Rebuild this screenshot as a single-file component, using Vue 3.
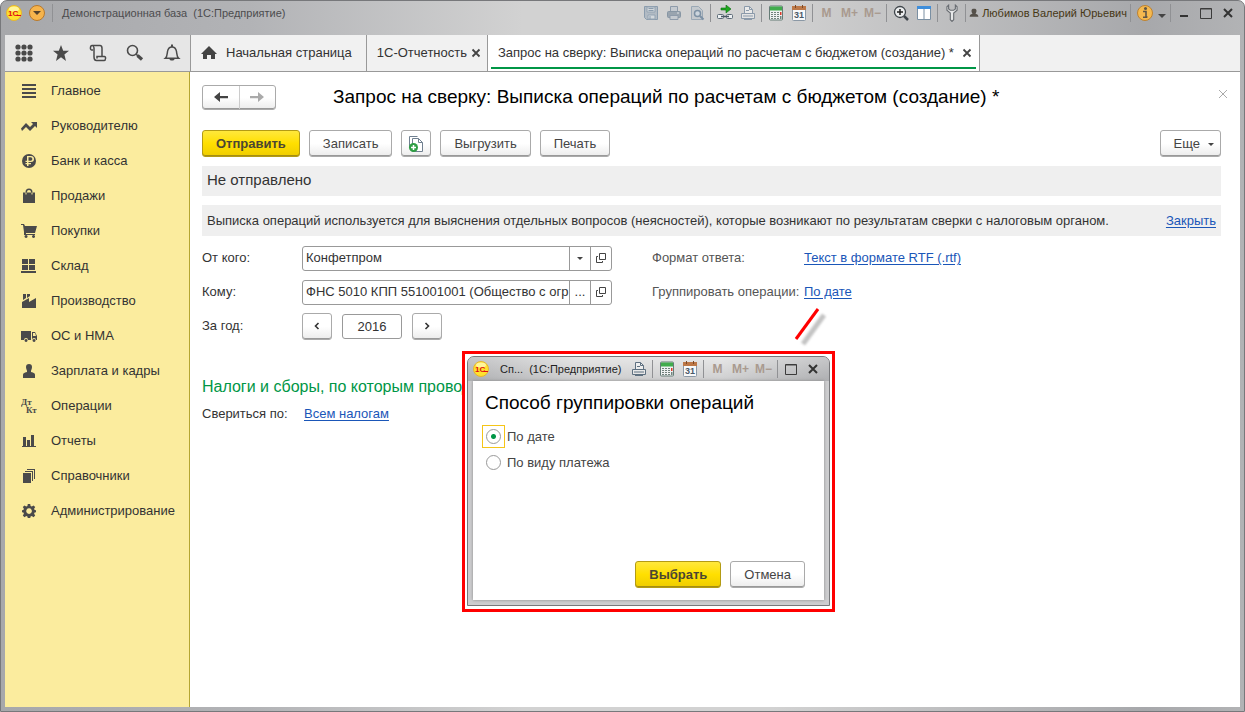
<script setup>
import { ref } from 'vue'

const sections = [
  { label: 'Главное', d: 'M1 1h14v2H1zM1 5h14v2H1zM1 9h14v2H1zM1 13h14v2H1z' },
  { label: 'Руководителю', d: 'M0 10.500L5 5l4 4 3-3-2-2h6v6l-2-2-5 5-4-4-4 4z' },
  { label: 'Банк и касса', d: 'M8 1a7 7 0 1 0 0 14A7 7 0 0 0 8 1zM6 3h4a2.500 2.500 0 0 1 0 6H7.500v1H10v1.200H7.500V13H6v-1.800H4.500V10H6V9H4.500V7.700H6zM7.500 4.300v3.400H9.700a1.700 1.700 0 0 0 0-3.400z' },
  { label: 'Продажи', d: 'M2 4.500h2.500V4a3.500 3.500 0 0 1 7 0v.5H14V15H2zM6 4.500h4V4a2 2 0 0 0-4 0zM4.500 4.500v2h1v-2zM10.500 4.500v2h1v-2z' },
  { label: 'Покупки', d: 'M0 1h3l1 2h12l-2 7H5v1h9v1H3V9L2 2H0zM5 12a1.500 1.500 0 1 0 .1 0zM12.500 12a1.500 1.500 0 1 0 .1 0z' },
  { label: 'Склад', d: 'M1 1h6v5H1zM8 1h6v5H8zM1 7h6v5H1zM8 7h6v5H8zM0 13h15v2H0z' },
  { label: 'Производство', d: 'M2 1h3v4l-3 2zM6 1h3v2L6 5zM1 9l7-4v4l7-4v10H1z' },
  { label: 'ОС и НМА', d: 'M0 3h10v9H7a2 2 0 0 0-4 0H0zM11 4h3l2 4v4h-1a2 2 0 0 0-4 0zM12 5v3h3l-1-3zM5 11a1.500 1.500 0 1 0 .1 0zM13 11a1.500 1.500 0 1 0 .1 0z' },
  { label: 'Зарплата и кадры', d: 'M8 1c2 0 3 1 3 3 0 2-1 3-1 4v1c3 1 4 1 4 3v3H2v-3c0-2 1-2 4-3V8C6 7 5 6 5 4c0-2 1-3 3-3z' },
  { label: 'Операции', marks: true },
  { label: 'Отчеты', d: 'M2 4h3v9H2zM6 7h3v6H6zM10 2h3v11h-3zM1 13h14v1H1z' },
  { label: 'Справочники', d: 'M2 5h8v10H2zM4 3h8v10h-1V4H4zM6 1h8v10h-1V2H6z' },
  { label: 'Администрирование', d: 'M6.800 1h2.400l.4 2 1.200.5 1.700-1.100 1.700 1.700-1.100 1.700.5 1.200 1.400.3v1.900l-1.400.4-.5 1.200 1.100 1.700-1.700 1.700-1.700-1.100-1.200.5-.4 1.400H6.800l-.4-1.400-1.200-.5-1.700 1.100-1.700-1.700 1.100-1.700-.5-1.200L1 9.200V7.300L2.400 7l.5-1.200-1.100-1.700 1.700-1.700 1.700 1.100L6.400 3zM8 5.300a2.800 2.800 0 1 0 .1 0z' }
]

const from = ref('Конфетпром')
const to = ref('ФНС 5010 КПП 551001001 (Общество с огр')
const year = ref('2016')
const grouping = ref('date')
</script>

<template>
  <div class="window">
    <svg class="sprite" aria-hidden="true">
      <symbol id="i-save" viewBox="0 0 16 16">
        <path d="M2 1.500h12.500v13h-11l-2-2v-11z" fill="#b1bac3" stroke="#8b9cad" />
        <path d="M4 2h8v5H4zM5 10h7v4H5z" fill="#d3d8dc" stroke="#95a4b3" />
        <path d="M5.500 3.500h5M5.500 5.500h5M7 11v3" stroke="#8b9cad" />
      </symbol>
      <symbol id="i-print" viewBox="0 0 16 16">
        <path d="M4.500 6V1.500h7V6" fill="#c5cad0" stroke="#8e9baa" />
        <rect x="1.500" y="6.500" width="13" height="6" rx="1" fill="#99a4af" stroke="#8796a4" />
        <path d="M4 10.500h8v4H4z" fill="#c5cad0" stroke="#8e9baa" />
        <path d="M11 8h2" stroke="#dde1e4" />
      </symbol>
      <symbol id="i-preview" viewBox="0 0 16 16">
        <path d="M2.500 14.500v-13h7l4 4v9z" fill="#c4c9ce" stroke="#9aa8b5" />
        <circle cx="8.500" cy="8.500" r="3" fill="#ccd5dd" stroke="#7d91a4" stroke-width="1.500" />
        <path d="M11 11l3.500 3.500" stroke="#7d91a4" stroke-width="2" />
      </symbol>
      <symbol id="i-link" viewBox="0 0 16 16">
        <path d="M4 3h5V0l5 4-5 4V5H4z" fill="#1fa81f" stroke="#0c6b12" stroke-width=".6" />
        <rect x=".5" y="9.500" width="6" height="4" rx="1" fill="#eef1f3" stroke="#5d6b77" />
        <rect x="9.500" y="9.500" width="6" height="4" rx="1" fill="#eef1f3" stroke="#5d6b77" />
        <path d="M4 11.500h8" stroke="#4b5965" stroke-width="1.500" />
      </symbol>
      <symbol id="i-doc" viewBox="0 0 16 16">
        <path d="M4.500 9V1.500h5l3 3V9" fill="#fff" fill-opacity=".5" stroke="currentColor" />
        <path d="M9.500 1.500v3h3M6 5.500h3" fill="none" stroke="currentColor" />
        <path d="M1.500 8.500h13v5h-13z" fill="#fff" fill-opacity=".4" stroke="currentColor" />
        <path d="M3 11h10M4 14.500h8" stroke="currentColor" />
      </symbol>
      <symbol id="i-calc" viewBox="0 0 16 16">
        <rect x="1.500" y="1" width="13" height="14" rx="1" fill="#eef1f1" stroke="#657c76" />
        <path d="M2 1.500h12v4H2z" fill="#41ac4d" />
        <path d="M3 7.500h8M3 9.500h8M3 11.500h8M3 13.500h8" stroke="#71817c" stroke-dasharray="2 1" />
        <path d="M12 7h1.500v3H12z" fill="#dc3a2b" />
        <path d="M12 11h1.500v3H12z" fill="#71817c" />
      </symbol>
      <symbol id="i-zoom" viewBox="0 0 16 16">
        <circle cx="7" cy="7" r="5.500" fill="#eceeef" stroke="#3f454b" stroke-width="1.300" />
        <path d="M4 7h6M7 4v6" stroke="#222" stroke-width="1.500" />
        <path d="M11 11l4 4" stroke="#3f454b" stroke-width="2.500" />
      </symbol>
      <symbol id="i-split" viewBox="0 0 16 16">
        <path d="M1.500 1.500h13v13h-13zM8 4v10" fill="#fff" stroke="#7a8fa2" />
        <path d="M1 1h14v3H1z" fill="#3f8edb" />
      </symbol>
      <symbol id="i-wrench" viewBox="0 0 16 16">
        <path d="M5 1L3.500 2.500v3L6.500 8v6l1.500 1.500L9.500 14V8l3-2.500v-3L11 1v3.500L9.500 5.500h-3L5 4.500z" fill="#e7e8e9" stroke="#696d72" />
      </symbol>
      <symbol id="i-user" viewBox="0 0 16 16">
        <path d="M8 1c3 0 4 1 4 3.500S11 8 10.500 9c3 1 4.500 2 4.500 5H1c0-3 1.500-4 4.500-5C5 8 4 7 4 4.500S5 1 8 1z" fill="#55504a" />
      </symbol>
      <symbol id="i-max" viewBox="0 0 16 16"><path d="M2.500 3.500h11v10h-11z" fill="none" stroke="#3b3b3b" /><path d="M2 4.300h12" stroke="#3b3b3b" stroke-width=".6" /></symbol>
      <symbol id="i-close" viewBox="0 0 16 16"><path d="M4 4l8 8M12 4l-8 8" stroke="#333" stroke-width="2" /></symbol>
      <symbol id="i-open" viewBox="0 0 16 16"><path d="M6.500 3.500h6v6h-6zM5 6.500H3.500v6h6V11" fill="none" stroke="#444" /></symbol>
    </svg>

    <header class="titlebar">
      <svg class="i16" viewBox="0 0 16 16">
        <circle cx="8" cy="8" r="7.500" fill="#ffe22e" stroke="#e6b52e" />
        <ellipse cx="8" cy="4" rx="5" ry="2.500" fill="#fff59a" />
        <text class="logo-text" x="2" y="11">1С</text>
        <path d="M11 10.500h4" stroke="#e00c18" />
      </svg>
      <button class="round-menu" aria-label="Меню">
        <svg class="i16" viewBox="0 0 16 16"><circle cx="8" cy="8" r="7.500" fill="#f6b44c" stroke="#b9792b" /><path d="M4 6h8l-4 4z" fill="#54422c" /></svg>
      </button>
      <i class="sep"></i>
      <span class="app-name">Демонстрационная база&nbsp; (1С:Предприятие)</span>
      <div class="tools">
        <button aria-label="Сохранить"><svg class="i16"><use href="#i-save" /></svg></button>
        <button aria-label="Печать"><svg class="i16"><use href="#i-print" /></svg></button>
        <button aria-label="Просмотр"><svg class="i16"><use href="#i-preview" /></svg></button>
        <i class="sep"></i>
        <button aria-label="Ссылка"><svg class="i16"><use href="#i-link" /></svg></button>
        <button class="dim" aria-label="Перейти по ссылке"><svg class="i16"><use href="#i-doc" /></svg></button>
        <i class="sep"></i>
        <button aria-label="Калькулятор"><svg class="i16"><use href="#i-calc" /></svg></button>
        <button aria-label="Календарь">
          <svg class="i16" viewBox="0 0 16 16"><rect x="1.500" y="1.500" width="13" height="14" rx="1" fill="#f8f9fa" stroke="#8b98a5" /><path d="M1 1h14v4H1z" fill="#bd7847" /><path d="M4.500 0v3M11.500 0v3" stroke="#7b4a28" /><text class="day" x="3" y="13">31</text></svg>
        </button>
        <i class="sep"></i>
        <button class="mem">M</button>
        <button class="mem">M+</button>
        <button class="mem">M−</button>
        <i class="sep"></i>
        <button aria-label="Масштаб"><svg class="i16"><use href="#i-zoom" /></svg></button>
        <button aria-label="Панели"><svg class="i16"><use href="#i-split" /></svg></button>
        <i class="sep"></i>
        <button aria-label="Настройки"><svg class="i18"><use href="#i-wrench" /></svg></button>
        <i class="sep"></i>
        <button class="user"><svg class="i10"><use href="#i-user" /></svg>Любимов Валерий Юрьевич</button>
        <i class="sep"></i>
        <button aria-label="Справка">
          <svg class="i16" viewBox="0 0 16 16"><circle cx="8" cy="8" r="7.500" fill="#f5b94f" stroke="#bd8231" /><circle cx="8.500" cy="3.500" r="1.500" fill="#5e5547" /><path d="M6 6.500h3v5.500h1.500M6 12.200h4" fill="none" stroke="#5e5547" stroke-width="1.600" /></svg>
        </button>
        <button class="narrow" aria-label="Еще"><svg class="i10" viewBox="0 0 10 10"><path d="M1 6h8L5 10z" fill="#444" /></svg></button>
        <i class="sep"></i>
        <button class="win" aria-label="Свернуть"><svg class="i16" viewBox="0 0 16 16"><path d="M4 10h8v2H4z" fill="#333" /></svg></button>
        <button class="win" aria-label="Развернуть"><svg class="i16"><use href="#i-max" /></svg></button>
        <button class="win" aria-label="Закрыть окно"><svg class="i16"><use href="#i-close" /></svg></button>
      </div>
    </header>

    <div class="body">
      <div class="quick">
        <button aria-label="Функции"><svg class="i20" viewBox="0 0 20 20"><g fill="#4a4a4a"><template v-for="y in 3" :key="y"><circle v-for="x in 3" :key="x" :cx="x * 6 - 2" :cy="y * 6 - 2" r="2.600" /></template></g></svg></button>
        <button aria-label="Избранное"><svg class="i20" viewBox="0 0 20 20"><path d="M10 2l2.200 5.800H18l-4.600 3.700L15 18l-5-3.800L5 18l1.600-6.500L2 7.800h5.800z" fill="#4a4a4a" /></svg></button>
        <button aria-label="История"><svg class="i20" viewBox="0 0 20 20"><path d="M5 7H3.500C2 7 2 2.500 4 2.500h8c2 0 2 1.500 2 3V13M5 3c1.500 1 1 2 1 4v7c0 2 .5 3.500 2.500 3.500H16c2 0 2-4 .5-4H9v2" fill="none" stroke="#4a4a4a" stroke-width="1.500" /></svg></button>
        <button aria-label="Поиск"><svg class="i20" viewBox="0 0 20 20"><circle cx="7.500" cy="7.500" r="5" fill="none" stroke="#4a4a4a" stroke-width="1.600" /><path d="M11 11l2 2" stroke="#4a4a4a" stroke-width="1.600" /><path d="M12.500 12.500l4.500 4" stroke="#4a4a4a" stroke-width="3.200" /></svg></button>
        <button aria-label="Оповещения"><svg class="i20" viewBox="0 0 20 20"><path d="M3.500 15.200C5 14 5 12 5.500 8.500 6 5.500 7.500 4 10 4s4 1.500 4.500 4.500c.5 3.500.5 5.500 2 6.700z" fill="none" stroke="#4a4a4a" stroke-width="1.500" /><path d="M9 1.500h2V4H9zM7.500 16h5c0 2-5 2-5 0z" fill="#4a4a4a" /></svg></button>
      </div>
      <nav class="tabs">
        <button class="tab home"><svg class="i16" viewBox="0 0 16 16"><path d="M8 1l8 8h-2v5h-4v-4H6v4H2V9H0z" fill="#444" /></svg>Начальная страница</button>
        <div class="tab"><button>1С-Отчетность</button><button class="x" aria-label="Закрыть вкладку"><svg class="i10" viewBox="0 0 10 10"><path d="M1.500 1.500l7 7M8.500 1.500l-7 7" stroke="#444" stroke-width="1.800" /></svg></button></div>
        <div class="tab active"><button>Запрос на сверку: Выписка операций по расчетам с бюджетом (создание) *</button><button class="x" aria-label="Закрыть вкладку"><svg class="i10" viewBox="0 0 10 10"><path d="M1.500 1.500l7 7M8.500 1.500l-7 7" stroke="#444" stroke-width="1.800" /></svg></button></div>
      </nav>

      <aside class="sidebar">
        <a v-for="s in sections" :key="s.label" href="#">
          <svg class="i16" viewBox="0 0 16 16">
            <path v-if="s.d" :d="s.d" fill="#4a4a4a" fill-rule="evenodd" />
            <g v-else class="marks"><text x="0" y="7">Дт</text><text x="5" y="15">Кт</text></g>
          </svg>
          <span>{{ s.label }}</span>
        </a>
      </aside>

      <main class="page">
        <div class="head">
          <div class="history">
            <button aria-label="Назад"><svg class="i16" viewBox="0 0 16 16"><path d="M15 7v2.200H7V13L1 8l6-5v4z" fill="#444" /></svg></button>
            <button aria-label="Вперед"><svg class="i16" viewBox="0 0 16 16"><path d="M1 7v2.200h8V13l6-5-6-5v4z" fill="#aaa" /></svg></button>
          </div>
          <h1>Запрос на сверку: Выписка операций по расчетам с бюджетом (создание) *</h1>
          <button class="page-close" aria-label="Закрыть форму"><svg class="i10" viewBox="0 0 10 10"><path d="M1 1l8 8M9 1L1 9" stroke="#aaa" /></svg></button>
        </div>

        <div class="commands">
          <button class="btn primary">Отправить</button>
          <button class="btn">Записать</button>
          <button class="btn icon" aria-label="Присоединить файл">
            <svg class="i20" viewBox="0 0 20 20"><path d="M3.500 14V2.500h8M6.500 17.500v-13h6l4 4v9zM12.500 4.500v4h4" fill="#fff" stroke="#708090" /><circle cx="7.500" cy="13.500" r="4.500" fill="#2f9e44" /><path d="M5 13.500h5M7.500 11v5" stroke="#fff" stroke-width="1.500" /></svg>
          </button>
          <button class="btn">Выгрузить</button>
          <button class="btn">Печать</button>
          <button class="btn more">Еще <svg class="i6" viewBox="0 0 6 6"><path d="M0 2h6L3 5z" fill="#444" /></svg></button>
        </div>

        <div class="status">Не отправлено</div>
        <div class="note"><span>Выписка операций используется для выяснения отдельных вопросов (неясностей), которые возникают по результатам сверки с налоговым органом.</span><a href="#">Закрыть</a></div>

        <div class="form">
          <label for="from">От кого:</label>
          <div class="field"><input id="from" v-model="from" type="text"><button aria-label="Выбрать из списка"><svg class="i6" viewBox="0 0 6 6"><path d="M0 2h6L3 5z" fill="#444" /></svg></button><button aria-label="Открыть"><svg class="i16"><use href="#i-open" /></svg></button></div>
          <span class="soft">Формат ответа:</span><a href="#">Текст в формате RTF (.rtf)</a>

          <label for="to">Кому:</label>
          <div class="field"><input id="to" v-model="to" type="text"><button>...</button><button aria-label="Открыть"><svg class="i16"><use href="#i-open" /></svg></button></div>
          <span class="soft">Группировать операции:</span><a href="#">По дате</a>

          <label for="year">За год:</label>
          <div class="year">
            <button class="btn step" aria-label="Предыдущий год"><svg class="i10" viewBox="0 0 10 10"><path d="M6.500 2l-3 3 3 3" fill="none" stroke="#333" stroke-width="1.600" /></svg></button>
            <input id="year" v-model="year" type="text">
            <button class="btn step" aria-label="Следующий год"><svg class="i10" viewBox="0 0 10 10"><path d="M3.500 2l3 3-3 3" fill="none" stroke="#333" stroke-width="1.600" /></svg></button>
          </div>
        </div>

        <h2>Налоги и сборы, по которым проводится</h2>
        <div class="scope"><span>Свериться по:</span><a href="#">Всем налогам</a></div>
      </main>
    </div>

    <svg class="pointer" viewBox="0 0 40 50" aria-hidden="true">
      <path d="M34 10L13 39" class="pointer-shadow" />
      <path d="M28 4L6 34" stroke="#f00" stroke-width="3" />
    </svg>

    <div class="callout">
      <section class="dialog" role="dialog" aria-labelledby="dialog-title">
        <header class="dialog-bar">
          <svg class="i16" viewBox="0 0 16 16">
            <circle cx="8" cy="8" r="7.500" fill="#ffe22e" stroke="#e6b52e" />
            <ellipse cx="8" cy="4" rx="5" ry="2.500" fill="#fff59a" />
            <text class="logo-text" x="2" y="11">1С</text>
            <path d="M11 10.500h4" stroke="#e00c18" />
          </svg>
          <span class="app-name">Сп...&nbsp; (1С:Предприятие)</span>
          <div class="tools">
            <button class="slate" aria-label="Печать"><svg class="i16"><use href="#i-doc" /></svg></button>
            <i class="sep"></i>
            <button aria-label="Калькулятор"><svg class="i16"><use href="#i-calc" /></svg></button>
            <button aria-label="Календарь">
              <svg class="i16" viewBox="0 0 16 16"><rect x="1.500" y="1.500" width="13" height="14" rx="1" fill="#f8f9fa" stroke="#8b98a5" /><path d="M1 1h14v4H1z" fill="#bd7847" /><path d="M4.500 0v3M11.500 0v3" stroke="#7b4a28" /><text class="day" x="3" y="13">31</text></svg>
            </button>
            <i class="sep"></i>
            <button class="mem">M</button>
            <button class="mem">M+</button>
            <button class="mem">M−</button>
            <i class="sep"></i>
            <button class="win" aria-label="Развернуть"><svg class="i16"><use href="#i-max" /></svg></button>
            <button class="win" aria-label="Закрыть диалог"><svg class="i16"><use href="#i-close" /></svg></button>
          </div>
        </header>
        <div class="dialog-body">
          <h1 id="dialog-title">Способ группировки операций</h1>
          <label class="option"><span class="ring" :class="{ on: grouping === 'date' }"><input v-model="grouping" type="radio" name="grouping" value="date"></span>По дате</label>
          <label class="option"><span class="ring" :class="{ on: grouping === 'kind' }"><input v-model="grouping" type="radio" name="grouping" value="kind"></span>По виду платежа</label>
          <footer>
            <button class="btn primary">Выбрать</button>
            <button class="btn">Отмена</button>
          </footer>
        </div>
      </section>
    </div>
  </div>
</template>

<style>
body { background: #fff; }
</style>

<style scoped>
* { box-sizing: border-box; }
.window {
  position: relative;
  display: flex;
  flex-direction: column;
  min-height: 100vh;
  padding: 0 4px 4px;
  border: 1px solid #77787b;
  border-radius: 7px 7px 0 0;
  background: linear-gradient(90deg, #a7a8ab, #b2b3b6 20%, #d2d2d2 42%, #d2d2d2 62%, #a7a8ab 92%, #b2b3b5);
  font: 13px/16px "Liberation Sans", Arial, sans-serif;
  color: #333;
  overflow: hidden;
}
.sprite { position: absolute; width: 0; height: 0; }
svg { display: block; flex: none; }
.i6 { width: 6px; height: 6px; }
.i10 { width: 10px; height: 10px; }
.i16 { width: 16px; height: 16px; }
.i18 { width: 18px; height: 18px; }
.i20 { width: 20px; height: 20px; }
.logo-text { font-size: 8px; font-weight: bold; fill: #e00c18; }
.day { font-size: 9px; font-weight: bold; fill: #4b5968; }
.marks { font: bold 9px "Liberation Serif", serif; fill: #4a4a4a; }
button { padding: 0; border: 0; background: none; font: inherit; color: inherit; display: flex; align-items: center; justify-content: center; white-space: nowrap; }
input { font: inherit; color: inherit; margin: 0; outline: 0; }
a { color: #1a56b8; text-underline-offset: 2px; }
h1, h2 { margin: 0; font-weight: normal; }
h1 { font-size: 19px; line-height: 26px; color: #000; }

.titlebar { display: flex; align-items: center; height: 34px; padding: 0 1px 10px; font-size: 11px; }
.round-menu { margin: 0 5px 0 7px; }
.app-name { white-space: nowrap; color: #4c4c4e; }
.titlebar .app-name { margin-left: 7px; }
.sep { flex: none; width: 5px; height: 18px; background: linear-gradient(90deg, transparent 2px, #909194 2px, #909194 3px, transparent 3px); }
.tools { display: flex; align-items: center; margin-left: auto; }
.tools button { width: 23px; height: 20px; }
.tools .mem { font-size: 12px; font-weight: bold; color: #a99a8f; }
.tools .win { width: 22px; }
.tools .narrow { width: 12px; }
.tools .user { width: 160px; gap: 3px; color: #463715; }
.dim { color: #8b9aaa; }
.slate { color: #5e7080; }

.body { flex: 1; display: grid; grid-template-columns: 185px minmax(0, 1fr); grid-template-rows: 37px 1fr; background: #fff; }
.quick { display: flex; align-items: center; justify-content: space-around; background: #e6e6e6; border-bottom: 1px solid #999; }
.quick button { width: 37px; height: 36px; }
.tabs { display: flex; background: #f1f1f1; border-bottom: 1px solid #999; border-left: 1px solid #999; }
.tab { position: relative; display: flex; align-items: center; gap: 4px; padding: 0 6px 0 10px; border-right: 1px solid #999; }
.tab.home { gap: 9px; padding: 0 14px 0 10px; }
.tab.active { gap: 8px; padding-right: 7px; background: #fff; }
.tab.active::after { content: ""; position: absolute; left: 3px; right: 3px; bottom: 2px; height: 2px; background: #009646; }

.sidebar { background: #fbec9e; border-right: 1px solid #b5a632; padding-top: 1px; }
.sidebar a { display: flex; align-items: center; gap: 14px; height: 35px; padding-left: 16px; color: #333; text-decoration: none; }

.page { padding: 12px 19px 12px 12px; }
.head { display: flex; align-items: center; height: 26px; }
.history { display: flex; width: 74px; height: 25px; border: 1px solid #aaa; border-radius: 3px; background: linear-gradient(#fff 50%, #ececec); box-shadow: inset 0 -1px #999; }
.history button { flex: 1; }
.history button + button { border-left: 1px solid #ccc; }
.head h1 { margin-left: 57px; white-space: nowrap; }
.page-close { width: 16px; height: 16px; margin: 0 -10px 6px auto; }
.commands { display: flex; gap: 9px; margin-top: 20px; }
.btn { height: 27px; padding: 0 13px; border: 1px solid #aaa; border-radius: 3px; background: linear-gradient(#fff 50%, #ececec); box-shadow: inset 0 -1px #999; color: #444; line-height: 17px; }
.btn.primary { border-color: #b39b14; background: linear-gradient(#ffe83c, #ffdf00 50%, #efcd00); box-shadow: inset 0 -1px #a58e12; font-weight: bold; color: #4b4632; }
.btn.icon { width: 30px; padding: 0; }
.btn.more { margin-left: auto; gap: 8px; padding: 0 6px 0 13px; }
.status { margin-top: 9px; padding: 5px; height: 30px; line-height: 18px; font-size: 15px; background: #efefef; }
.note { display: flex; justify-content: space-between; align-items: center; gap: 12px; min-height: 31px; margin-top: 9px; padding: 0 5px; background: #efefef; }
.form { display: grid; grid-template-columns: 100px 350px 152px 1fr; grid-auto-rows: 34px; align-items: center; margin-top: 5px; }
.form > a { justify-self: start; }
.soft { color: #555; white-space: nowrap; }
.field { display: flex; width: 310px; height: 25px; border: 1px solid #999; border-radius: 3px; background: #fff; }
.field input { flex: 1; min-width: 0; padding: 0 0 0 3px; border: 0; background: none; }
.field button { width: 21px; border-left: 1px solid #999; }
.year { display: flex; gap: 10px; align-items: center; }
.btn.step { width: 30px; padding: 0; }
.year input { width: 60px; height: 25px; padding: 0; border: 1px solid #999; border-radius: 3px; text-align: center; }
h2 { margin-top: 34px; font-size: 16px; line-height: 20px; color: #009646; white-space: nowrap; }
.scope { display: flex; margin-top: 9px; }
.scope span { width: 102px; }

.pointer { position: absolute; left: 789px; top: 304px; width: 40px; height: 50px; fill: none; }
.pointer-shadow { stroke: #888; stroke-width: 5; opacity: .5; filter: blur(1px); }
.callout { position: absolute; left: 461px; top: 350px; width: 373px; height: 261px; border: 3px solid #f00; padding: 2px 2px 3px; background: #fff; }
.dialog { display: flex; flex-direction: column; height: 100%; padding: 0 5px 5px; border: 1px solid #77787b; border-radius: 7px 7px 0 0; background: #cdcdcf; }
.dialog-bar { display: flex; align-items: center; height: 24px; margin: 0 -5px; padding: 0 5px; border-radius: 6px 6px 0 0; background: linear-gradient(90deg, #a7a8ab88, #e0e0e088 30%, #e4e4e488 70%, #a7a8ab88), linear-gradient(#ececec, #b5b6b8); font-size: 11px; }
.dialog-bar .app-name { margin-left: 11px; color: #222; }
.dialog-body { flex: 1; display: flex; flex-direction: column; padding: 9px 19px 12px 9px; background: #fff; box-shadow: 0 0 3px #888; }
.dialog-body h1 { margin: 0 0 9px 3px; }
.option { display: flex; align-items: center; gap: 2px; height: 23px; margin-bottom: 3px; color: #444; }
.ring { display: flex; padding: 3px; border: 1px solid transparent; }
.ring.on { border-color: #f5c518; }
.ring input { appearance: none; width: 15px; height: 15px; border: 1px solid #999; border-radius: 50%; background: #fff; }
.ring input:checked { background: radial-gradient(circle, #009646 2px, #fff 3px); }
.dialog-body footer { display: flex; justify-content: flex-end; gap: 9px; margin-top: auto; }
</style>
